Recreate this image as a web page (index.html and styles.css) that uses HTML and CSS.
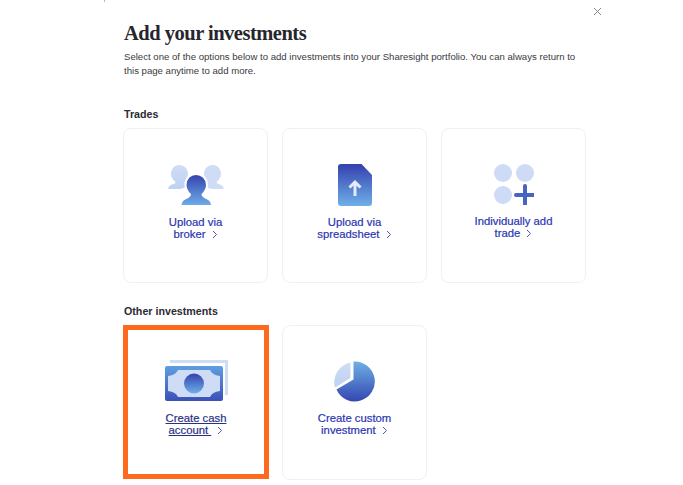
FILE: index.html
```html
<!DOCTYPE html>
<html lang="en">
<head>
<meta charset="utf-8">
<title>Add your investments</title>
<link rel="stylesheet" href="styles.css">
</head>
<body>
<svg class="defs" width="0" height="0" aria-hidden="true">
  <defs>
    <linearGradient id="down" x1="0" y1="0" x2="0" y2="1"><stop offset="0" stop-color="#3440ae"/><stop offset="1" stop-color="#6fb0e8"/></linearGradient>
    <linearGradient id="up" x1="0" y1="0" x2="0" y2="1"><stop offset="0" stop-color="#6fb0e6"/><stop offset="1" stop-color="#3446b0"/></linearGradient>
    <linearGradient id="cash" x1="0" y1="0" x2="0" y2="1"><stop offset="0" stop-color="#5f9fe0"/><stop offset="1" stop-color="#3c50b6"/></linearGradient>
    <linearGradient id="pale" x1="0" y1="0" x2="0" y2="1"><stop offset="0" stop-color="#cfdcf6"/><stop offset="1" stop-color="#bcd2f2"/></linearGradient>
  </defs>
</svg>
<span class="speck"></span>
<button class="close" aria-label="Close">
  <svg width="9" height="9" viewBox="0 0 9 9"><path d="M1 1l7 7M8 1L1 8" stroke="#85868f" stroke-width="1" fill="none"/></svg>
</button>
<main class="page">
  <h1 class="title">Add your investments</h1>
  <p class="intro">Select one of the options below to add investments into your Sharesight portfolio. You can always return to this page anytime to add more.</p>

  <h2 class="section-title section-first">Trades</h2>
  <div class="card-grid">
    <a class="card">
      <svg class="icon" width="56" height="42" viewBox="0 0 56 42">
        <path fill="url(#pale)" d="M11 1c5.500 0 9 4 9 9 0 4-2 7-3.500 8.500 0 1.500 2 2.500 4 3.500-5 2-7 3-9 3H0.500C0 23 1 22 3 21c2.500-1 4.500-1.500 4.500-3C5.500 16 3 13.500 3 10c0-5 3.500-9 8-9z"/>
        <path fill="#cfdcf6" d="M45 1c-5.500 0-9 4-9 9 0 4 2 7 3.500 8.500 0 1.500-2 2.500-4 3.500 5 2 7 3 9 3h11c.500-2-.5-3-2.500-4-2.500-1-4.500-1.500-4.500-3 2-2 4.500-4.500 4.500-8 0-5-3.500-9-8-9z"/>
        <path fill="url(#down)" stroke="#fff" stroke-width="2" d="M28 10c6 0 11 4.500 11 11 0 4.500-2.500 7.500-4.500 9.500 0 2 2.500 3 5 4 3 1.200 4.500 3 4.500 7.500H12.500c0-4.500 1.500-6.300 4.500-7.500 2.500-1 5-2 5-4-2-2-4.500-5-4.500-9.500 0-6.500 4.500-11 10.500-11z"/>
      </svg>
      <span class="label">Upload via<br>broker <svg class="chevron" width="6" height="9" viewBox="0 0 6 9"><path d="M1 1l3.500 3.500L1 8"/></svg></span>
    </a>
    <a class="card">
      <svg class="icon" width="34" height="42" viewBox="0 0 34 42">
        <path fill="url(#down)" d="M3 0h20.500L34 11v28a3 3 0 0 1-3 3H3a3 3 0 0 1-3-3V3a3 3 0 0 1 3-3z"/>
        <path d="M17 32V19M11.500 23.500L17 18l5.500 5.500" fill="none" stroke="#e4ebfa" stroke-width="3"/>
      </svg>
      <span class="label">Upload via<br>spreadsheet <svg class="chevron" width="6" height="9" viewBox="0 0 6 9"><path d="M1 1l3.500 3.500L1 8"/></svg></span>
    </a>
    <a class="card">
      <svg class="icon" width="40" height="41" viewBox="0 0 40 41">
        <circle cx="9" cy="9" r="9" fill="#cddbf6"/>
        <circle cx="31" cy="9" r="9" fill="#cddbf6"/>
        <circle cx="9" cy="31" r="9" fill="#cddbf6"/>
        <path d="M22 31h18M31 22v18" stroke="#4765be" stroke-width="4" stroke-linecap="round"/>
      </svg>
      <span class="label">Individually add<br>trade <svg class="chevron" width="6" height="9" viewBox="0 0 6 9"><path d="M1 1l3.500 3.500L1 8"/></svg></span>
    </a>
  </div>

  <h2 class="section-title">Other investments</h2>
  <div class="card-grid">
    <a class="card card-focus">
      <svg class="icon icon-cash" width="63" height="41" viewBox="0 0 63 41">
        <path fill="#cfdcf6" d="M5 0h58v35h-3V3H5z"/>
        <rect x="0" y="6" width="58" height="35" rx="2" fill="url(#cash)"/>
        <path fill="#cfdcf6" d="M13 10H45Q47 15 55 16V31Q47 32 45 37H13Q11 32 3 31V16Q11 15 13 10Z"/>
        <circle cx="29" cy="23.500" r="10" fill="url(#down)"/>
      </svg>
      <span class="label label-focus"><u>Create cash<br>account&nbsp;</u> <svg class="chevron" width="6" height="9" viewBox="0 0 6 9"><path d="M1 1l3.500 3.500L1 8"/></svg></span>
    </a>
    <a class="card">
      <svg class="icon" width="41" height="41" viewBox="0 0 41 41">
        <path fill="url(#up)" d="M19.500 0.500A20 20 0 1 1 2.500 28.500L19.500 18.500z"/>
        <path fill="url(#pale)" d="M16.500 1.500V17L1 26.500A20 20 0 0 1 16.500 1.500z"/>
      </svg>
      <span class="label">Create custom<br>investment <svg class="chevron" width="6" height="9" viewBox="0 0 6 9"><path d="M1 1l3.500 3.500L1 8"/></svg></span>
    </a>
  </div>
</main>
</body>
</html>
```

FILE: styles.css
```css
* { box-sizing: border-box; }

html, body {
  margin: 0;
  height: 485px;
  overflow: hidden;
  background: #fff;
}

body {
  position: relative;
  font-family: "Liberation Sans", Arial, sans-serif;
  color: #2c2c33;
}

.defs { position: absolute; }

.speck {
  position: absolute;
  left: 104px;
  top: 0;
  width: 1px;
  height: 2px;
  background: #b8b8bc;
}

.close {
  position: absolute;
  left: 593px;
  top: 7px;
  display: flex;
  padding: 0;
  border: 0;
  background: none;
}

.page {
  width: 463px;
  margin-left: 124px;
  padding-top: 21px;
}

.title {
  margin: 0;
  font-family: "Liberation Serif", serif;
  font-size: 20.5px;
  font-weight: 700;
  letter-spacing: -0.5px;
  line-height: 24px;
  color: #26262c;
}

.intro {
  margin: 5px 0 0;
  font-size: 9.6px;
  line-height: 14px;
  color: #3a3a41;
}

.section-title {
  margin: 0 0 7px;
  font-size: 10.7px;
  font-weight: 700;
  line-height: 14px;
  color: #2c2c33;
}

.section-first { margin-top: 29px; }

.card-grid {
  display: grid;
  grid-template-columns: repeat(3, 145px);
  column-gap: 14px;
  margin: 0 0 21px -1px;
}

.card {
  display: flex;
  flex-direction: column;
  align-items: center;
  height: 155px;
  padding-top: 35px;
  border: 1px solid #f0f0f3;
  border-radius: 8px;
  background: #fff;
}

.card-focus {
  border: 5px solid #fd6a1e;
  border-radius: 0;
  padding-top: 30px;
  height: 154px;
  margin-right: -1px;
}

.icon { flex: none; }

.icon-cash { margin-left: 1px; }

.label {
  margin-top: 10px;
  font-size: 11.3px;
  font-weight: 400;
  line-height: 12px;
  text-align: center;
  color: #2a35b0;
  -webkit-text-stroke: 0.2px #2a35b0;
}

.label-focus {
  margin-top: 11px;
  color: #2a3084;
  -webkit-text-stroke-color: #2a3084;
}

.chevron {
  margin-left: 3px;
  vertical-align: -1px;
  fill: none;
  stroke: #4b55b4;
  stroke-width: 1;
  -webkit-text-stroke: 0;
}
```
